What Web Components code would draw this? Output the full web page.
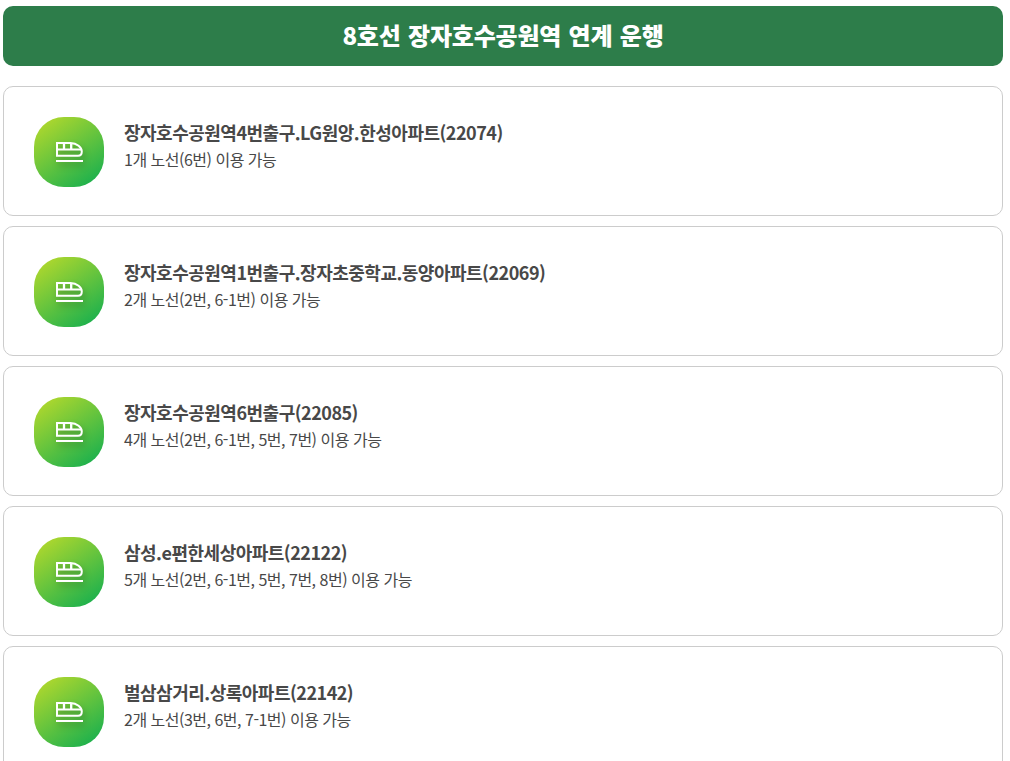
<!DOCTYPE html>
<html lang="ko">
<head>
<meta charset="utf-8">
<title>8호선 장자호수공원역 연계 운행</title>
<style>
  body {
    margin: 0;
    padding: 6px 7px 0 3px;
    height: 755px;
    overflow: hidden;
    background: #fff;
    color: #484848;
    font-family: "Noto Sans CJK KR", "Noto Sans", sans-serif;
    letter-spacing: -0.5px;
  }
</style>
</head>
<body>
<line-heading>8호선 장자호수공원역 연계 운행</line-heading>
<stop-list></stop-list>

<script>
class LineHeading extends HTMLElement {
  constructor() {
    super();
    this.attachShadow({ mode: 'open' });
    this.shadowRoot.innerHTML = `
      <style>
        :host { display: block; margin-bottom: 20px; }
        h2 {
          margin: 0; height: 60px; line-height: 57px; border-radius: 10px;
          background: #2d7d4a; color: #fff; text-align: center;
          font-size: 24px; font-weight: 900;
          letter-spacing: -0.2px; word-spacing: 0.9px;
        }
      </style>
      <h2><slot></slot></h2>
    `;
  }
}

class TrainIcon extends HTMLElement {
  constructor() {
    super();
    this.attachShadow({ mode: 'open' });
    this.shadowRoot.innerHTML = `
      <style>
        :host {
          display: flex; flex: none; align-items: center; justify-content: center;
          width: 70px; height: 70px; border-radius: 30px;
          background: linear-gradient(145deg, #b5d92c 5%, #1ab04e 92%);
        }
        svg { display: block; filter: drop-shadow(2px 4px 3px rgba(0, 0, 0, .25)); }
      </style>
      <svg width="28" height="22" viewBox="0 0 28 22" fill="none" stroke="#fff" stroke-width="2">
        <path d="M2 1.9H15.5C22 1.9 26.8 6.5 26.8 10.5C26.8 13.5 25.5 14.8 23 14.8H2Z"/>
        <path d="M2 8.5H26" />
        <path d="M9 2V8.5M16.2 2V8.5" stroke-width="2.3"/>
        <path d="M1 20H28"/>
      </svg>
    `;
  }
}

class StopCard extends HTMLElement {
  constructor() {
    super();
    this.attachShadow({ mode: 'open' });
    this.shadowRoot.innerHTML = `
      <style>
        :host {
          display: flex; gap: 20px; box-sizing: border-box; height: 130px;
          padding: 30px; border: 1px solid #ccc; border-radius: 10px;
        }
        .name { font-size: 18px; font-weight: 700; line-height: 30px; }
        .routes { font-size: 16px; line-height: 24px; }
      </style>
      <train-icon></train-icon>
      <div>
        <div class="name"><slot name="name"></slot></div>
        <div class="routes"><slot></slot></div>
      </div>
    `;
  }
}

class StopList extends HTMLElement {
  constructor() {
    super();
    this.attachShadow({ mode: 'open' });
    this.stops = [
      ['장자호수공원역4번출구.LG원앙.한성아파트(22074)', ['6번']],
      ['장자호수공원역1번출구.장자초중학교.동양아파트(22069)', ['2번', '6-1번']],
      ['장자호수공원역6번출구(22085)', ['2번', '6-1번', '5번', '7번']],
      ['삼성.e편한세상아파트(22122)', ['2번', '6-1번', '5번', '7번', '8번']],
      ['벌삼삼거리.상록아파트(22142)', ['3번', '6번', '7-1번'], 2],
    ];
    this.render();
  }

  render() {
    this.shadowRoot.innerHTML = `
      <style>
        :host { display: flex; flex-direction: column; gap: 10px; }
      </style>
      ${this.stops.map(([name, routes, count = routes.length]) => `
        <stop-card>
          <span slot="name">${name}</span>
          ${count}개 노선(${routes.join(', ')}) 이용 가능
        </stop-card>
      `).join('')}
    `;
  }
}

customElements.define('line-heading', LineHeading);
customElements.define('train-icon', TrainIcon);
customElements.define('stop-card', StopCard);
customElements.define('stop-list', StopList);
</script>
</body>
</html>
